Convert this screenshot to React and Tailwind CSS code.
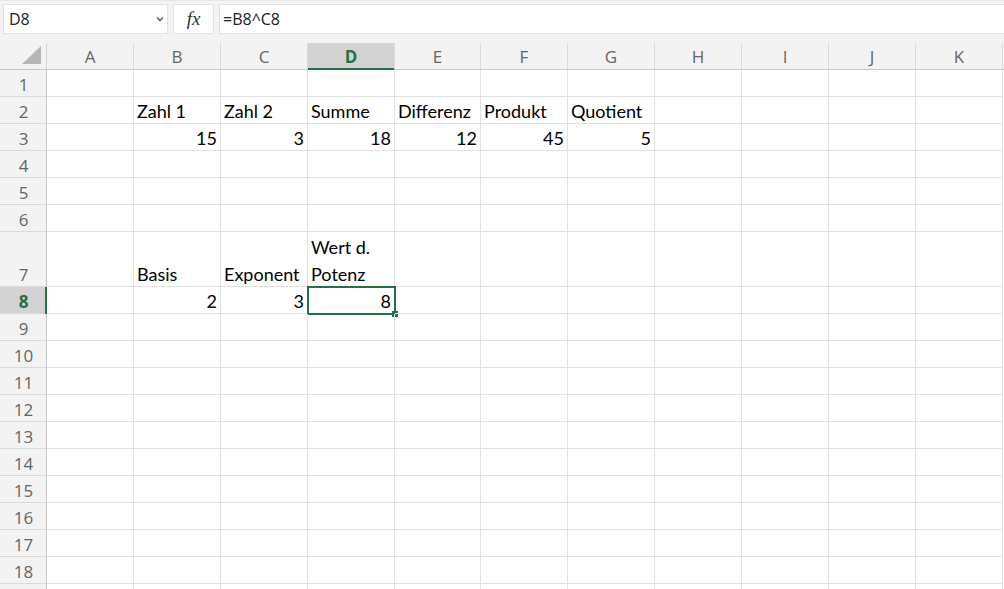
import React from "react";

const COLS = ["A", "B", "C", "D", "E", "F", "G", "H", "I", "J", "K"];
const COLW = ["w-[87px]", "w-[87px]", "w-[87px]", "w-[87px]", "w-[86px]", "w-[87px]", "w-[87px]", "w-[87px]", "w-[87px]", "w-[87px]", "w-[87px]"];

const DATA = {
  B2: { v: "Zahl 1" },
  C2: { v: "Zahl 2" },
  D2: { v: "Summe" },
  E2: { v: "Differenz" },
  F2: { v: "Produkt" },
  G2: { v: "Quotient" },
  B3: { v: "15", r: true },
  C3: { v: "3", r: true },
  D3: { v: "18", r: true },
  E3: { v: "12", r: true },
  F3: { v: "45", r: true },
  G3: { v: "5", r: true },
  B7: { v: "Basis" },
  C7: { v: "Exponent" },
  D7: { v: ["Wert d.", "Potenz"] },
  B8: { v: "2", r: true },
  C8: { v: "3", r: true },
  D8: { v: "8", r: true },
};

const ROWS = Array.from({ length: 19 }, (_, i) => i + 1);

function Corner() {
  return (
    <svg width="20" height="19" viewBox="0 0 20 19">
      <polygon points="19,0 19,18 0,18" fill="#b6b6b6" />
    </svg>
  );
}

function Cell({ id, wcls, rowH }) {
  const d = DATA[id];
  const selected = id === "D8";
  const lines = d ? (Array.isArray(d.v) ? d.v : [d.v]) : [];
  return (
    <div
      className={`${wcls} ${rowH} relative shrink-0 border-r border-b border-[#e1e1e1] flex flex-col justify-end px-[3px] text-[18px] leading-[27px] text-black whitespace-nowrap ${
        d && d.r ? "items-end" : "items-start"
      }`}
    >
      {lines.map((l, i) => (
        <div key={i} className="translate-y-[2px]">{l}</div>
      ))}
      {selected && (
        <>
          <div className="absolute left-[-1px] top-[-1px] right-[-2px] bottom-[-2px] border-2 border-[#217346] pointer-events-none" />
          <div className="absolute right-[-4px] bottom-[-4px] w-[6px] h-[6px] bg-[#217346] pointer-events-none" />
        </>
      )}
    </div>
  );
}

export default function App() {
  return (
    <div className="w-[1004px] h-[589px] overflow-hidden bg-white" style={{ fontFamily: "Lato, 'Open Sans', sans-serif" }}>
      {/* Formula bar */}
      <div className="h-[43px] bg-[#f3f3f3] flex items-start pt-[3px] pl-[3px] gap-[5px] border-t border-[#e6e6e6]">
        <div className="w-[165px] h-[30px] bg-white border border-[#e3e3e3] flex items-center justify-between pl-[5px] pr-[2px] text-[16px] text-[#222]" style={{ fontFamily: "'Open Sans', sans-serif" }}>
          <span>D8</span>
          <svg width="10" height="10" viewBox="0 0 10 10">
            <path d="M2 3.5 L5 6.5 L8 3.5" fill="none" stroke="#555" strokeWidth="1.3" />
          </svg>
        </div>
        <div className="w-[41px] h-[30px] bg-white border border-[#e3e3e3] flex items-center justify-center text-[19px] italic text-[#333]" style={{ fontFamily: "'Liberation Serif', serif" }}>
          fx
        </div>
        <div className="flex-1 h-[30px] bg-white border border-[#e3e3e3] border-r-0 flex items-center pl-[3px] text-[16px] text-[#222]" style={{ fontFamily: "'Open Sans', sans-serif" }}>
          =B8^C8
        </div>
      </div>

      {/* Column headers */}
      <div className="flex h-[27px] bg-[#f3f3f3] border-b border-[#c8c8c8]" style={{ fontFamily: "'Open Sans', sans-serif" }}>
        <div className="w-[47px] shrink-0 border-r border-[#d4d4d4] flex items-end justify-end pr-[4px] pb-[4px]">
          <Corner />
        </div>
        {COLS.map((c, i) => {
          const sel = c === "D";
          return (
            <div
              key={c}
              className={`${COLW[i]} shrink-0 border-r border-[#dadada] flex items-center justify-center text-[17px] relative ${
                sel ? "bg-[#d3d3d3] text-[#217346] font-bold" : "text-[#666]"
              }`}
            >
              <span className="translate-y-[1px]">{c}</span>
              {sel && <div className="absolute left-0 right-0 bottom-[-1px] h-[2px] bg-[#217346]" />}
            </div>
          );
        })}
      </div>

      {/* Rows */}
      {ROWS.map((r) => {
        const rowH = r === 7 ? "h-[55px]" : "h-[27px]";
        const sel = r === 8;
        return (
          <div key={r} className="flex">
            <div
              className={`w-[47px] ${rowH} shrink-0 border-b border-[#dadada] flex items-end justify-center text-[17px] leading-[24px] relative ${
                sel ? "bg-[#d3d3d3] text-[#217346] font-bold" : "bg-[#f3f3f3] text-[#666]"
              }`}
              style={{ fontFamily: "'Open Sans', sans-serif" }}
            >
              {r < 19 && <span className="translate-y-[1px]">{r}</span>}
              <div className={`absolute top-0 right-0 bottom-[-1px] ${sel ? "w-[2px] bg-[#217346]" : "w-[1px] bg-[#c8c8c8]"}`} />
            </div>
            {COLS.map((c, i) => (
              <Cell key={c} id={`${c}${r}`} wcls={COLW[i]} rowH={rowH} />
            ))}
          </div>
        );
      })}
    </div>
  );
}
